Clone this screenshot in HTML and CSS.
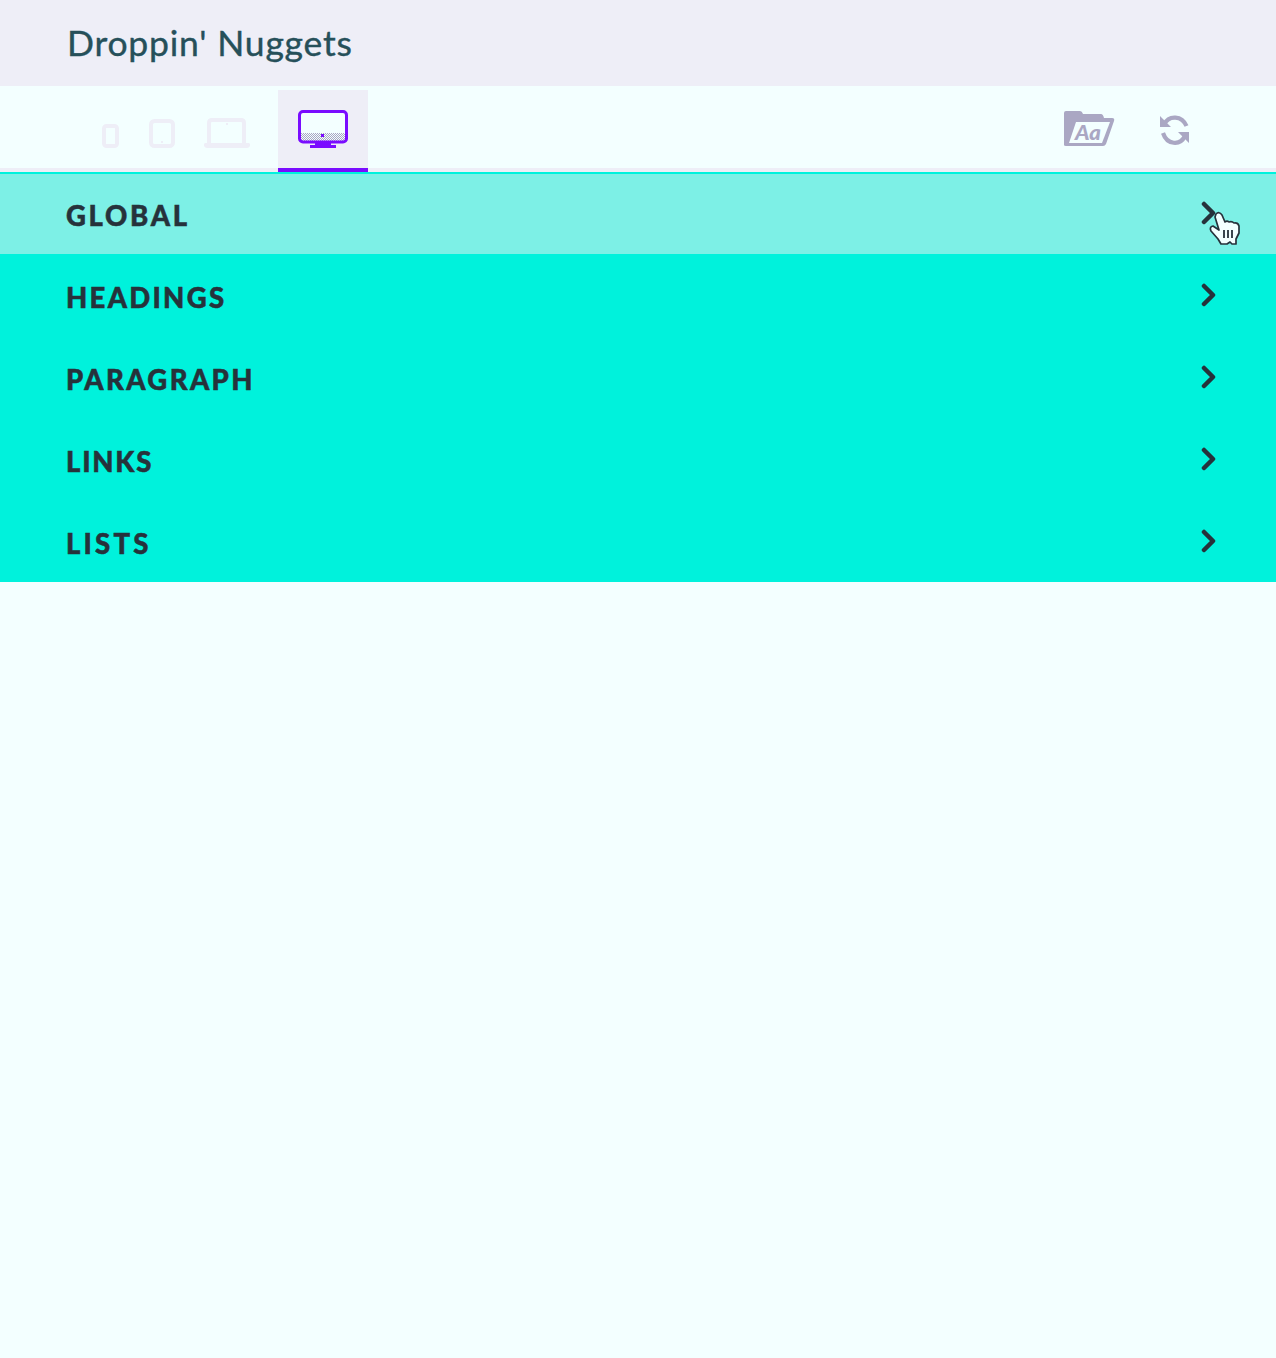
FILE: index.html
```html
<!DOCTYPE html>
<html lang="en">
<head>
<meta charset="utf-8">
<title>Droppin' Nuggets</title>
<link rel="stylesheet" href="styles.css">
</head>
<body>
<header class="header"><h1 class="title">Droppin' Nuggets</h1></header>
<nav class="toolbar">
  <div class="devices">
    <svg class="device phone" width="17" height="24" viewBox="0 0 17 24"><rect x="2" y="2" width="13" height="20" rx="2.5"/></svg>
    <svg class="device tablet" width="26" height="29" viewBox="0 0 26 29"><rect x="2" y="2" width="22" height="25" rx="3.5"/><path class="fill" d="M12 22h2v2h-2z"/></svg>
    <svg class="device laptop" width="46" height="30" viewBox="0 0 46 30"><path d="M5 26V5q0-3 3-3h29q3 0 3 3v21"/><path class="fill" d="M22 5h2v2h-2zM1 25h44l1 1v2q-1 2-3 2H3q-2 0-3-2v-2z"/></svg>
    <div class="active">
      <svg width="52" height="40" viewBox="0 0 52 40">
        <defs><pattern id="dots" width="2" height="2" patternUnits="userSpaceOnUse"><path d="M0 0h1v1H0zM1 1h1v1H1z" fill="#aaa7c3"/></pattern></defs>
        <rect x="3" y="3" width="46" height="30" rx="2" fill="#f3ffff"/>
        <path d="M4 24h44v8H4z" fill="url(#dots)"/>
        <rect x="2.500" y="2.500" width="47" height="30.500" rx="3.500" fill="none" stroke="#7a0cff" stroke-width="3"/>
        <path d="M18 34h16v2h5v3H13v-3h5zM24 25h3v3h-3z" fill="#7a0cff"/>
      </svg>
    </div>
  </div>
  <div class="actions">
    <svg width="51" height="36" viewBox="0 0 51 36">
      <path d="M0 34V2Q0 0 2 0h14q2 0 3 3h18q2 0 3 4h8q3 0 2 3l-8 23q-1 2-3 2H2q-2 0-2-1z" fill="#aaa7c3"/>
      <path d="M12 11h34l-8 21H5z" fill="#f3ffff"/>
      <text class="folder-text" x="11" y="28.500" textLength="26" lengthAdjust="spacingAndGlyphs">Aa</text>
    </svg>
    <svg width="30" height="30" viewBox="0 0 30 30">
      <path d="M4 9.500C9-.5 22 .5 26.500 11M25 21C20 31 7 30 3 18" fill="none" stroke="#aaa7c3" stroke-width="4.200"/>
      <path d="M0 1v11h11L7.500 8.500 3.500 4.500zM29 28V17H18l3.500 3.500z" fill="#aaa7c3"/>
    </svg>
  </div>
</nav>
<main class="menu">
  <div class="row global"><span>GLOBAL</span><svg class="arrow" width="16" height="24" viewBox="0 0 16 24"><path d="M3 3l9 9-9 9"/></svg></div>
  <div class="row headings"><span>HEADINGS</span><svg class="arrow" width="16" height="24" viewBox="0 0 16 24"><path d="M3 3l9 9-9 9"/></svg></div>
  <div class="row paragraph"><span>PARAGRAPH</span><svg class="arrow" width="16" height="24" viewBox="0 0 16 24"><path d="M3 3l9 9-9 9"/></svg></div>
  <div class="row links"><span>LINKS</span><svg class="arrow" width="16" height="24" viewBox="0 0 16 24"><path d="M3 3l9 9-9 9"/></svg></div>
  <div class="row lists"><span>LISTS</span><svg class="arrow" width="16" height="24" viewBox="0 0 16 24"><path d="M3 3l9 9-9 9"/></svg></div>
</main>
<svg class="cursor" width="32" height="35" viewBox="0 0 32 35">
  <path d="M7 3q3-3 6 1l3 7q2-2 4 0 3-1 5 1 4-1 5 3v7l-3 6v5h-4l-2-2-3 2h-6l-3-5-7-8q-2-4 2-5l6 4-4-13z" fill="#f3ffff" stroke="#26323b" stroke-width="1.700" stroke-linejoin="round"/>
  <path d="M15 19v8M19 19v8M23 19v8" stroke="#26323b" stroke-width="1.800"/>
</svg>
</body>
</html>
```
FILE: styles.css
```css
* { box-sizing: border-box; }
body { position: relative; margin: 0; min-height: 1358px; background: #f3ffff; color: #26323b; font-family: Lato, "Open Sans", sans-serif; }
svg { display: block; flex: none; }
.header { height: 86px; padding: 22px 0 0 67px; background: #eeeef7; }
.title { margin: 0; font-size: 35.5px; line-height: 42px; font-weight: 400; letter-spacing: .8px; white-space: nowrap; color: #26505a; -webkit-text-stroke: .4px #26505a; }
.toolbar { display: flex; justify-content: space-between; height: 86px; padding: 4px 86px 0 102px; background: linear-gradient(#eeeef7, #eeeef7) bottom / 100% 4px no-repeat; }
.devices { display: flex; height: 82px; align-items: flex-start; }
.device { fill: none; stroke: #eeeef7; stroke-width: 4; }
.device .fill { fill: #eeeef7; stroke: none; }
.phone { margin-top: 34px; }
.tablet { margin: 29px 0 0 30px; }
.laptop { margin: 28px 28px 0 29px; }
.active { width: 90px; height: 82px; padding: 19px 0 0 19px; background: #eeeef7; border-bottom: 4px solid #7a0cff; }
.actions { display: flex; gap: 45px; padding-top: 21px; }
.actions svg + svg { margin-top: 4px; }
.folder-text { font: italic 900 21px Lato, sans-serif; fill: #aaa7c3; }
.menu { border-top: 2px solid #00f2dc; background: #00f2dc; }
.row { display: flex; justify-content: space-between; height: 82px; padding: 27px 59px 0 66px; font-size: 27.5px; line-height: 34px; font-weight: 900; -webkit-text-stroke: .5px #26323b; }
.global { height: 80px; padding-top: 25px; background: #7df0e6; letter-spacing: 2.7px; }
.headings { letter-spacing: 2.3px; }
.paragraph { letter-spacing: 2.4px; }
.links { letter-spacing: 1.8px; }
.lists { letter-spacing: 3.2px; }
.arrow { margin-top: 2px; fill: none; stroke: #26323b; stroke-width: 4.5; stroke-linecap: round; stroke-linejoin: round; }
.cursor { position: absolute; left: 1209px; top: 211px; }
```
